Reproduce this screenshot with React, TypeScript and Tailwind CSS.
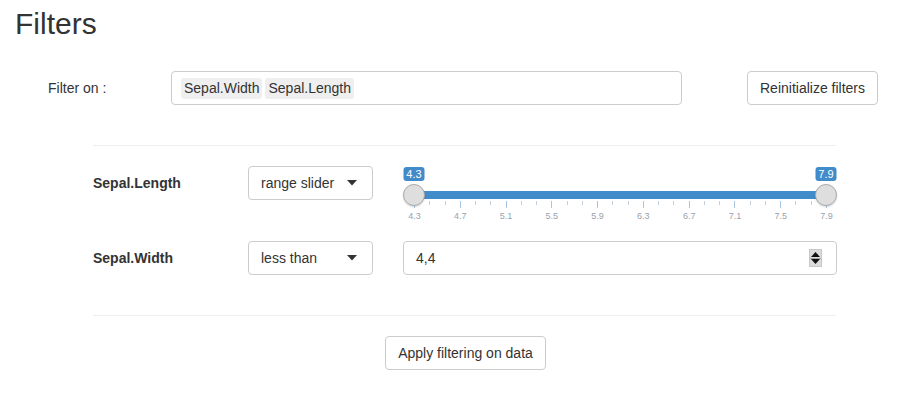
import React from 'react';

const ticks = [4.3, 4.7, 5.1, 5.5, 5.9, 6.3, 6.7, 7.1, 7.5, 7.9];

// Small filled caret used by the dropdown buttons
const Caret = () => (
  <svg width="10" height="6" viewBox="0 0 10 6" className="shrink-0">
    <path d="M0 0 L10 0 L5 5.5 Z" fill="#333" />
  </svg>
);

const Dropdown = ({ label }: { label: string }) => (
  <div className="w-[125px] h-[34px] border border-[#ccc] rounded-[4px] bg-white flex items-center justify-between pl-[12px] pr-[15px]">
    <span>{label}</span>
    <Caret />
  </div>
);

// ion.rangeSlider style widget, full range selected
const RangeSlider = () => {
  const left = 11;
  const span = 412;
  const pos = (v: number) => left + ((v - 4.3) / 3.6) * span;
  const minor: number[] = [];
  for (let i = 0; i < 27; i++) {
    if (i % 3 !== 0) minor.push(left + (i / 27) * span);
  }
  return (
    <div className="relative w-[434px] h-[60px]">
      {/* value tags */}
      <div
        className="absolute top-[1px] h-[14px] w-[21px] -translate-x-1/2 rounded-[3px] bg-[#428bca] text-white text-[11px] leading-[14px] text-center"
        style={{ left: pos(4.3) }}
      >
        4.3
      </div>
      <div
        className="absolute top-[1px] h-[14px] w-[21px] -translate-x-1/2 rounded-[3px] bg-[#428bca] text-white text-[11px] leading-[14px] text-center"
        style={{ left: pos(7.9) }}
      >
        7.9
      </div>
      {/* bar */}
      <div className="absolute top-[25px] h-[8px] bg-[#428bca]" style={{ left: left, width: span }} />
      {/* grid */}
      {minor.map((x, i) => (
        <div key={`m-${i}`} className="absolute top-[35px] w-px h-[4px] bg-[#c5cfd9]" style={{ left: x }} />
      ))}
      {ticks.map((t) => (
        <React.Fragment key={t}>
          <div className="absolute top-[35px] w-px h-[7px] bg-[#a9c6e2]" style={{ left: pos(t) }} />
          <div
            className="absolute top-[45px] w-[30px] -translate-x-1/2 text-center text-[9px] leading-[11px] text-[#9aa2ad]"
            style={{ left: pos(t) + 0.5 }}
          >
            {t.toFixed(1)}
          </div>
        </React.Fragment>
      ))}
      {/* handles */}
      {[4.3, 7.9].map((v) => (
        <div
          key={`h-${v}`}
          className="absolute top-[18px] w-[22px] h-[22px] -translate-x-1/2 rounded-full bg-[#dedede] border border-[#ababab] shadow-[0_1px_2px_rgba(0,0,0,0.15)]"
          style={{ left: pos(v) }}
        />
      ))}
    </div>
  );
};

const NumberInput = () => (
  <div className="w-[434px] h-[34px] border border-[#ccc] rounded-[4px] bg-white flex items-center justify-between pl-[12px] pr-[14px]">
    <span>4,4</span>
    <div className="w-[13px] h-[18px] bg-[#dcdcdc] border border-[#c8c8c8] flex flex-col items-center justify-between py-[2px]">
      <svg width="9" height="5" viewBox="0 0 9 5">
        <path d="M0 5 L9 5 L4.5 0 Z" fill="#111" />
      </svg>
      <div className="w-full h-px bg-[#aaa]" />
      <svg width="9" height="5" viewBox="0 0 9 5">
        <path d="M0 0 L9 0 L4.5 5 Z" fill="#111" />
      </svg>
    </div>
  </div>
);

export default function App() {
  return (
    <div className="w-[915px] h-[411px] bg-white text-[#333] text-[14px] font-['Liberation_Sans',Arial,sans-serif] overflow-hidden">
      <h2 className="pl-[15px] pt-[7px] text-[30px] leading-[33px] font-normal">Filters</h2>

      <div className="flex items-center mt-[31px] pl-[48px]">
        <div className="w-[123px]">Filter on :</div>
        <div className="w-[511px] h-[34px] border border-[#ccc] rounded-[4px] flex items-center gap-[3px] pl-[9px]">
          <span className="bg-[#efefef] rounded-[3px] px-[3px] leading-[21px]">Sepal.Width</span>
          <span className="bg-[#efefef] rounded-[3px] px-[3px] leading-[21px]">Sepal.Length</span>
        </div>
        <button className="ml-[65px] h-[34px] px-[12px] border border-[#ccc] rounded-[4px] bg-white">
          Reinitialize filters
        </button>
      </div>

      <div className="ml-[93px] w-[743px] h-px bg-[#eee] mt-[40px]" />

      <div className="ml-[93px] mt-[20px] flex flex-col">
        <div className="flex items-start h-[75px]">
          <div className="w-[155px] h-[34px] flex items-center font-bold">Sepal.Length</div>
          <Dropdown label="range slider" />
          <div className="ml-[30px]">
            <RangeSlider />
          </div>
        </div>
        <div className="flex items-center h-[34px]">
          <div className="w-[155px] font-bold">Sepal.Width</div>
          <Dropdown label="less than" />
          <div className="ml-[30px]">
            <NumberInput />
          </div>
        </div>
      </div>

      <div className="ml-[93px] w-[743px] h-px bg-[#eee] mt-[40px]" />

      <div className="flex justify-center mt-[20px] pl-[16px]">
        <button className="h-[34px] px-[12px] border border-[#ccc] rounded-[4px] bg-white">
          Apply filtering on data
        </button>
      </div>
    </div>
  );
}
